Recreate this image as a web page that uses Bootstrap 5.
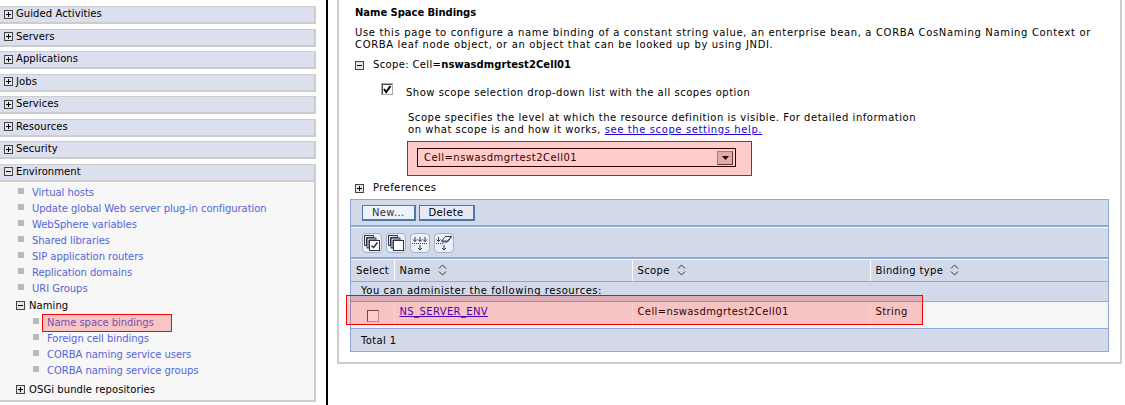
<!DOCTYPE html>
<html lang="en">
<head>
    <meta charset="UTF-8">
    <title>Name Space Bindings</title>
    <link href="https://cdn.jsdelivr.net/npm/bootstrap@5.3.0/dist/css/bootstrap.min.css" rel="stylesheet">
    <style>
        html, body { height: 405px; overflow: hidden; }
        body { position: relative; background: #fff; font-family: "DejaVu Sans", sans-serif; font-size: 10px; line-height: 12px; color: #000; }
        a { color: #2200dd; }
        .page-wrap { height: 405px; }
        .side-nav { width: 316px; padding-top: 6px; flex: none; letter-spacing: .08px; }
        .nav-head { height: 18px; background: #dbdfee; border: 2px solid #cdcdcd; border-width: 1px 2px 2px 0; display: flex; align-items: center; gap: 3px; padding-left: 4px; padding-bottom: 1px; margin-bottom: 4.5px; }
        .nav-head.open { margin-bottom: 0; }
        .nav-body { background: #f7f7f7; border-right: 2px solid #cdcdcd; border-bottom: 2px solid #cdcdcd; height: 220px; padding-top: 3px; }
        .nav-link-row { height: 16px; display: flex; align-items: center; padding-left: 18px; gap: 8px; color: #5565d8; letter-spacing: -.05px; }
        .nav-link-row.deep { padding-left: 33px; }
        .nav-sq { width: 6px; height: 6px; background: #bbb; margin-top: -4px; flex: none; }
        .nav-group { height: 18px; display: flex; align-items: center; gap: 4px; padding-left: 16px; }
        .nav-group.last-group { margin-top: 2px; }
        .split-line { width: 2px; background: #000; margin-left: 10px; flex: none; }
        .main-panel { width: 785px; height: 364px; margin-left: 9px; border-left: 2px solid #cdcdcd; border-right: 2px solid #cdcdcd; border-bottom: 2px solid #cdcdcd; padding: 7px 0 0 16px; flex: none; letter-spacing: .5px; }
        .page-title { font-weight: 700; line-height: 12px; margin-bottom: 8px; letter-spacing: -.05px; }
        .page-desc { margin-bottom: 7px; letter-spacing: .65px; }
        .scope-line { display: flex; align-items: center; gap: 9px; height: 14px; letter-spacing: .35px; }
        .scope-line b { letter-spacing: .05px; }
        .scope-check { display: flex; gap: 13px; margin: 11px 0 0 26px; height: 17px; }
        .fake-check { width: 12px; height: 12px; border: 1px solid #aaa; background: #fff; flex: none; }
        .scope-help { margin: 12px 0 0 53px; letter-spacing: .52px; }
        .scope-help a { letter-spacing: .6px; }
        .scope-select { width: 319px; height: 19px; margin: 12px 0 0 62px; border: 1px solid #000; background: #fff; display: flex; align-items: center; justify-content: space-between; padding: 0 2px 0 6px; letter-spacing: .46px; }
        .select-btn { width: 16px; height: 14px; background: #d8d8d8; border: 1px solid #999; border-right-color: #444; border-bottom-color: #444; display: flex; align-items: center; justify-content: center; }
        .prefs-line { display: flex; align-items: center; gap: 9px; height: 14px; margin-top: 14px; letter-spacing: .42px; }
        .res-box { width: 759px; margin: 4px 0 0 -5px; border: 1px solid #8ea9d8; background: #fff; }
        .tool-bar { background: #d2d9e8; display: flex; align-items: center; }
        .btn-bar { height: 27px; gap: 3px; padding-left: 11px; border-bottom: 2px solid #8ea9d8; }
        .icon-bar { height: 31px; gap: 4px; padding-left: 11px; margin-top: 1px; border-bottom: 2px solid #8ea9d8; }
        .ws-btn { height: 16px; padding: 0 9px; border: 1px solid #4d78a8; border-width: 1px 2px 2px 1px; background: #eef2fb; font-size: 10px; line-height: 13px; color: #333; border-radius: 0; letter-spacing: .35px; }
        .ws-btn.alt { background: #e4e9f5; color: #000; }
        .ws-icon { width: 20px; height: 20px; border: 1px solid #9fb0cc; border-radius: 4px; background: #edf0f7; display: flex; align-items: center; justify-content: center; }
        .res-table { width: 100%; table-layout: fixed; margin: 0; border-collapse: collapse; letter-spacing: .38px; }
        .res-table th, .res-table td { background: #d2d9e8; font-weight: 400; padding: 0 0 0 5px; border: 0; border-left: 1px solid #fff; border-bottom: 1px solid #8ea9d8; vertical-align: middle; }
        .res-table tr > :first-child { border-left: 0; }
        .res-table thead th { height: 22px; border-top: 1px solid #fff; }
        .res-table td.sub-row { height: 20px; padding-left: 10px; padding-bottom: 1px; letter-spacing: .54px; }
        .res-table td.data-cell { height: 27px; background: #f6f6f6; padding-bottom: 6px; }
        .res-table td.total-row { height: 22px; padding: 2px 0 0 10px; border-bottom: 0; }
        .res-table td.cell-check { padding: 1px 0 0 2px; text-align: center; }
        .row-check { display: inline-block; width: 12px; height: 12px; border: 1px solid; border-color: #555 #aaa #aaa #555; background: #fff; vertical-align: middle; }
        .sort-mark { margin-left: 7px; vertical-align: -2px; }
        .red-mark { position: absolute; background: rgba(255, 0, 0, .2); border: 1px solid #f00; }
        .mark-nav { left: 42px; top: 314px; width: 130px; height: 18px; }
        .mark-scope { left: 407px; top: 141px; width: 345px; height: 35px; }
        .mark-row { left: 346px; top: 295px; width: 577px; height: 30px; }
    </style>
</head>
<body>
    <svg width="0" height="0" class="position-absolute">
        <symbol id="tree-plus" viewBox="0 0 9 9"><rect x=".5" y=".5" width="8" height="8" fill="#e6e6e6" stroke="#444"/><path d="M2 4.500h5M4.500 2v5" stroke="#000"/></symbol>
        <symbol id="tree-minus" viewBox="0 0 9 9"><rect x=".5" y=".5" width="8" height="8" fill="#e6e6e6" stroke="#444"/><path d="M2 4.500h5" stroke="#000"/></symbol>
        <symbol id="sort-arrows" viewBox="0 0 9 12"><path d="M1 4.500 4.500 1 8 4.500" fill="none" stroke="#333"/><path d="M1 7.500 4.500 11 8 7.500" fill="none" stroke="#333"/></symbol>
    </svg>

    <div class="page-wrap d-flex">
        <div class="side-nav">
            <div class="nav-head"><svg width="9" height="9"><use href="#tree-plus"/></svg>Guided Activities</div>
            <div class="nav-head"><svg width="9" height="9"><use href="#tree-plus"/></svg>Servers</div>
            <div class="nav-head"><svg width="9" height="9"><use href="#tree-plus"/></svg>Applications</div>
            <div class="nav-head"><svg width="9" height="9"><use href="#tree-plus"/></svg>Jobs</div>
            <div class="nav-head"><svg width="9" height="9"><use href="#tree-plus"/></svg>Services</div>
            <div class="nav-head"><svg width="9" height="9"><use href="#tree-plus"/></svg>Resources</div>
            <div class="nav-head"><svg width="9" height="9"><use href="#tree-plus"/></svg>Security</div>
            <div class="nav-head open"><svg width="9" height="9"><use href="#tree-minus"/></svg>Environment</div>
            <div class="nav-body">
                <div class="nav-link-row"><span class="nav-sq"></span>Virtual hosts</div>
                <div class="nav-link-row"><span class="nav-sq"></span>Update global Web server plug-in configuration</div>
                <div class="nav-link-row"><span class="nav-sq"></span>WebSphere variables</div>
                <div class="nav-link-row"><span class="nav-sq"></span>Shared libraries</div>
                <div class="nav-link-row"><span class="nav-sq"></span>SIP application routers</div>
                <div class="nav-link-row"><span class="nav-sq"></span>Replication domains</div>
                <div class="nav-link-row"><span class="nav-sq"></span>URI Groups</div>
                <div class="nav-group"><svg width="9" height="9"><use href="#tree-minus"/></svg>Naming</div>
                <div class="nav-link-row deep"><span class="nav-sq"></span>Name space bindings</div>
                <div class="nav-link-row deep"><span class="nav-sq"></span>Foreign cell bindings</div>
                <div class="nav-link-row deep"><span class="nav-sq"></span>CORBA naming service users</div>
                <div class="nav-link-row deep"><span class="nav-sq"></span>CORBA naming service groups</div>
                <div class="nav-group last-group"><svg width="9" height="9"><use href="#tree-plus"/></svg>OSGi bundle repositories</div>
            </div>
        </div>
        <div class="split-line"></div>
        <div class="main-panel">
            <div class="page-title">Name Space Bindings</div>
            <div class="page-desc">Use this page to configure a name binding of a constant string value, an enterprise bean, a CORBA CosNaming Naming Context or<br>CORBA leaf node object, or an object that can be looked up by using JNDI.</div>
            <div class="scope-line"><svg width="9" height="9"><use href="#tree-minus"/></svg><span>Scope: Cell=<b>nswasdmgrtest2Cell01</b></span></div>
            <div class="scope-check">
                <svg class="fake-check" viewBox="0 0 10 10"><path d="M0 .5h10M.5 0v10" stroke="#444"/><path d="M2 5 4.200 8 8.500 2" fill="none" stroke="#000" stroke-width="2"/></svg>
                <span class="pt-1">Show scope selection drop-down list with the all scopes option</span>
            </div>
            <div class="scope-help">Scope specifies the level at which the resource definition is visible. For detailed information<br>on what scope is and how it works, <a href="#">see the scope settings help.</a></div>
            <div class="scope-select"><span>Cell=nswasdmgrtest2Cell01</span><span class="select-btn"><svg width="7" height="4"><path d="M0 0h7L3.500 4z" fill="#000"/></svg></span></div>
            <div class="prefs-line"><svg width="9" height="9"><use href="#tree-plus"/></svg>Preferences</div>
            <div class="res-box">
                <div class="tool-bar btn-bar">
                    <button type="button" class="ws-btn">New...</button>
                    <button type="button" class="ws-btn alt">Delete</button>
                </div>
                <div class="tool-bar icon-bar">
                    <span class="ws-icon"><svg width="16" height="16" viewBox="0 0 16 16"><path d="M.5.500h9v2h-7v8h-2zM3 3h9v2H5v8H3z" fill="#dfe4ee" stroke="#334"/><rect x="5.500" y="5.500" width="10" height="10" fill="#fff" stroke="#334"/><path d="m7.500 10.500 2 2 4-5" fill="none" stroke="#223" stroke-width="1.300"/></svg></span>
                    <span class="ws-icon"><svg width="16" height="16" viewBox="0 0 16 16"><path d="M.5.500h9v2h-7v8h-2zM3 3h9v2H5v8H3z" fill="#dfe4ee" stroke="#334"/><rect x="5.500" y="5.500" width="10" height="10" fill="#fff" stroke="#334"/></svg></span>
                    <span class="ws-icon"><svg width="16" height="16" viewBox="0 0 16 16"><path d="M0 8.500h16" stroke="#335" stroke-dasharray="1 1"/><path d="M3 2v4.500M1 4.500 3 6.500l2-2M8 2v4.500M6 4.500 8 6.500l2-2M13 2v4.500M11 4.500l2 2 2-2M8 10v5M6 13l2 2 2-2" fill="none" stroke="#335"/></svg></span>
                    <span class="ws-icon"><svg width="16" height="16" viewBox="0 0 16 16"><path d="M0 8.500h7" stroke="#335" stroke-dasharray="1 1"/><path d="M2.500 2v4.500M.5 4.500l2 2 2-2M8 10v5M6 13l2 2 2-2" fill="none" stroke="#335"/><path d="M5.500 6 9.500 1.500h6L11.500 7h-5z" fill="#fff" stroke="#335"/><path d="M5.500 6h6l4-4.500" fill="none" stroke="#335"/></svg></span>
                </div>
                <table class="res-table">
                    <colgroup><col style="width: 43px"><col style="width: 238px"><col style="width: 238px"><col></colgroup>
                    <thead>
                        <tr>
                            <th>Select</th>
                            <th>Name<svg class="sort-mark" width="9" height="12"><use href="#sort-arrows"/></svg></th>
                            <th>Scope<svg class="sort-mark" width="9" height="12"><use href="#sort-arrows"/></svg></th>
                            <th>Binding type<svg class="sort-mark" width="9" height="12"><use href="#sort-arrows"/></svg></th>
                        </tr>
                    </thead>
                    <tbody>
                        <tr><td colspan="4" class="sub-row">You can administer the following resources:</td></tr>
                        <tr>
                            <td class="data-cell cell-check"><span class="row-check"></span></td>
                            <td class="data-cell"><a href="#">NS_SERVER_ENV</a></td>
                            <td class="data-cell">Cell=nswasdmgrtest2Cell01</td>
                            <td class="data-cell">String</td>
                        </tr>
                        <tr><td colspan="4" class="total-row">Total 1</td></tr>
                    </tbody>
                </table>
            </div>
        </div>
    </div>

    <div class="red-mark mark-nav"></div>
    <div class="red-mark mark-scope"></div>
    <div class="red-mark mark-row"></div>

    <script src="https://cdn.jsdelivr.net/npm/bootstrap@5.3.0/dist/js/bootstrap.bundle.min.js"></script>
</body>
</html>
